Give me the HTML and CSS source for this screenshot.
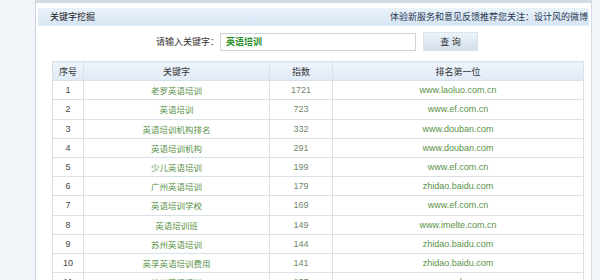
FILE: index.html
```html
<!DOCTYPE html>
<html lang="zh-CN">
<head>
    <meta charset="UTF-8">
    <title>关键字挖掘</title>
    <link rel="stylesheet" href="styles.css">
</head>
<body>
    <div class="page">
        <div class="panel">
            <div class="panel-head">
                <span class="panel-title">关键字挖掘</span>
                <span class="panel-tip">体验新服务和意见反馈推荐您关注：设计风的微博</span>
            </div>
            <!-- 搜索 -->
            <form class="search-row">
                <label for="kw">请输入关键字：</label>
                <div class="search-input" id="kw">英语培训</div>
                <button type="button" class="search-btn">查 询</button>
            </form>
            <!-- 结果表格 -->
            <table class="result">
                <colgroup>
                    <col style="width: 31px">
                    <col style="width: 186px">
                    <col style="width: 63px">
                    <col>
                </colgroup>
                <thead>
                    <tr><th>序号</th><th>关键字</th><th>指数</th><th>排名第一位</th></tr>
                </thead>
                <tbody>
                    <tr><td class="num">1</td><td class="kw">老罗英语培训</td><td class="idx">1721</td><td class="url">www.laoluo.com.cn</td></tr>
                    <tr><td class="num">2</td><td class="kw">英语培训</td><td class="idx">723</td><td class="url">www.ef.com.cn</td></tr>
                    <tr><td class="num">3</td><td class="kw">英语培训机构排名</td><td class="idx">332</td><td class="url">www.douban.com</td></tr>
                    <tr><td class="num">4</td><td class="kw">英语培训机构</td><td class="idx">291</td><td class="url">www.douban.com</td></tr>
                    <tr><td class="num">5</td><td class="kw">少儿英语培训</td><td class="idx">199</td><td class="url">www.ef.com.cn</td></tr>
                    <tr><td class="num">6</td><td class="kw">广州英语培训</td><td class="idx">179</td><td class="url">zhidao.baidu.com</td></tr>
                    <tr><td class="num">7</td><td class="kw">英语培训学校</td><td class="idx">169</td><td class="url">www.ef.com.cn</td></tr>
                    <tr><td class="num">8</td><td class="kw">英语培训班</td><td class="idx">149</td><td class="url">www.imelte.com.cn</td></tr>
                    <tr><td class="num">9</td><td class="kw">苏州英语培训</td><td class="idx">144</td><td class="url">zhidao.baidu.com</td></tr>
                    <tr><td class="num">10</td><td class="kw">英孚英语培训费用</td><td class="idx">141</td><td class="url">zhidao.baidu.com</td></tr>
                    <tr><td class="num">11</td><td class="kw">杭州英语培训</td><td class="idx">137</td><td class="url">www.acadsoc.com</td></tr>
                </tbody>
            </table>
        </div>
    </div>
</body>
</html>
```

FILE: styles.css
```css
body {
    margin: 0;
    padding: 0;
    background-color: #f2f6fa;
    font-family: "Liberation Sans", "Noto Sans CJK SC", sans-serif;
    font-size: 9px;
    color: #333;
}
.page {
    display: flex;
    padding: 0 8px 0 35px;
}
.panel {
    flex: 1;
    background-color: #fff;
    border-left: 1px solid #c6d2de;
    border-right: 1px solid #d2dce6;
    border-top: 3px solid #d5dbe2;
    padding: 5px 2px 0 2px;
    min-height: 300px;
}
.panel-head {
    display: flex;
    justify-content: space-between;
    align-items: center;
    height: 17px;
    padding: 0 1px 0 12px;
    background: linear-gradient(#eaf2fa, #d6e5f3);
    border-bottom: 1px solid #e2ebf4;
}
.panel-title {
    color: #222;
}
.panel-tip {
    color: #1f3550;
}
.search-row {
    display: flex;
    align-items: center;
    margin: 6px 0 0 0;
    padding-left: 118px;
    height: 19px;
}
.search-row label {
    width: 64px;
    color: #333;
}
.search-input {
    box-sizing: border-box;
    width: 196px;
    height: 18px;
    line-height: 16px;
    padding-left: 5px;
    border: 1px solid #ccd3da;
    background-color: #fff;
    color: #2f8f2f;
    font-weight: bold;
}
.search-btn {
    box-sizing: border-box;
    margin-left: 7px;
    width: 55px;
    height: 19px;
    padding: 0;
    border: 1px solid #d9e3ec;
    background: linear-gradient(#edf3f9, #d3dfeb);
    font-family: inherit;
    font-size: 9px;
    color: #333;
    cursor: pointer;
}
.result {
    margin: 10px 0 0 14px;
    width: 532px;
    border-collapse: collapse;
    table-layout: fixed;
}
.result th, .result td {
    border: 1px solid #d8e0e8;
    height: 18.2px;
    padding: 0;
    text-align: center;
    font-weight: normal;
    white-space: nowrap;
    overflow: hidden;
}
.result th {
    background: linear-gradient(#eef4fb, #e0ebf7);
    color: #333;
}
.result .num {
    color: #444;
}
.result .kw {
    color: #5a9248;
    font-size: 8.5px;
}
.result .idx {
    color: #72866a;
}
.result .url {
    color: #5a9248;
}
```
